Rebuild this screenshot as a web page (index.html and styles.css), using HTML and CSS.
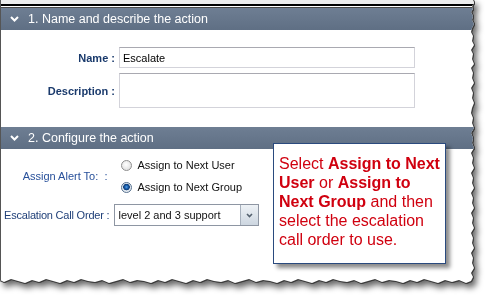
FILE: index.html
```html
<!DOCTYPE html>
<html lang="en">

<head>
    <meta charset="UTF-8">
    <title>Escalate action</title>
    <link rel="stylesheet" href="styles.css">
</head>

<body>
    <div class="frame">
        <div class="sheet">
            <div class="topbar"></div>

            <div class="section-head">
                <svg class="chevron" width="9" height="6" viewBox="0 0 9 6">
                    <polyline points="1,1 4.5,4.5 8,1" fill="none" stroke="#fff" stroke-width="2" />
                </svg>
                <span>1. Name and describe the action</span>
            </div>
            <div class="form form-name">
                <div class="field-label">Name :</div>
                <div class="input">Escalate</div>
                <div class="field-label">Description :</div>
                <div class="input textarea"></div>
            </div>

            <div class="section-head">
                <svg class="chevron" width="9" height="6" viewBox="0 0 9 6">
                    <polyline points="1,1 4.5,4.5 8,1" fill="none" stroke="#fff" stroke-width="2" />
                </svg>
                <span>2. Configure the action</span>
            </div>
            <div class="form form-config">
                <div class="config-label assign">Assign Alert To: &nbsp;:</div>
                <div class="radios">
                    <div class="radio"><span class="radio-dot"></span>Assign to Next User</div>
                    <div class="radio"><span class="radio-dot checked"></span>Assign to Next Group</div>
                </div>
                <div class="config-label">Escalation Call Order :</div>
                <div class="select">
                    <span class="select-value">level 2 and 3 support</span>
                    <span class="select-btn">
                        <svg width="7" height="5" viewBox="0 0 7 5">
                            <polyline points="1,1 3.5,3.5 6,1" fill="none" stroke="#55616f" stroke-width="1.6" />
                        </svg>
                    </span>
                </div>
            </div>

            <div class="callout">
                <p>Select <b>Assign to Next</b> <b>User</b> or <b>Assign to</b> <b>Next Group</b> and then select the escalation call order to use.</p>
            </div>
        </div>
    </div>
</body>

</html>
```

FILE: styles.css
```css
body {
    margin: 0;
    background: #fff;
    font-family: "Liberation Sans", Arial, sans-serif;
    font-size: 11px;
    color: #111;
}

/* torn paper edge with a soft shadow */
.frame {
    width: 493px;
    height: 299px;
    filter: drop-shadow(1px 0 0 #3c3c3c) drop-shadow(0 1px 0 #3c3c3c) drop-shadow(3px 4px 3px rgba(0, 0, 0, 0.6));
}

.sheet {
    position: relative;
    width: 476px;
    height: 285px;
    background: #fff;
    border-left: 1px solid #555;
    clip-path: polygon(0 0, 473px 0, 474px 3px, 472px 6px, 473px 9px, 471px 12px, 473px 16px, 472px 20px, 474px 24px, 472px 28px, 471px 32px, 473px 36px, 472px 41px, 474px 45px, 471px 50px, 473px 54px, 472px 59px, 474px 64px, 471px 68px, 473px 73px, 472px 78px, 474px 83px, 471px 88px, 473px 93px, 472px 98px, 474px 103px, 472px 108px, 471px 113px, 473px 118px, 472px 123px, 474px 128px, 471px 133px, 473px 138px, 472px 143px, 474px 148px, 471px 153px, 473px 158px, 472px 163px, 474px 168px, 471px 173px, 473px 178px, 472px 183px, 474px 188px, 471px 193px, 473px 198px, 472px 203px, 474px 208px, 471px 213px, 473px 218px, 472px 223px, 474px 228px, 471px 233px, 473px 238px, 472px 243px, 474px 248px, 471px 253px, 473px 258px, 472px 263px, 474px 268px, 471px 273px, 473px 277px, 471px 281px,
        466px 283px, 459px 280px, 452px 282px, 445px 280px, 438px 283px, 431px 281px, 424px 279px, 417px 282px, 410px 280px, 403px 283px, 396px 281px, 389px 280px, 382px 282px, 375px 279px, 368px 281px, 361px 283px, 354px 280px, 347px 282px, 340px 281px, 333px 279px, 326px 282px, 319px 280px, 312px 283px, 305px 281px, 298px 279px, 291px 282px, 284px 280px, 277px 283px, 270px 281px, 263px 280px, 256px 282px, 249px 279px, 242px 281px, 235px 283px, 228px 280px, 221px 282px, 214px 281px, 207px 279px, 200px 282px, 193px 280px, 186px 283px, 179px 281px, 172px 279px, 165px 282px, 158px 280px, 151px 283px, 144px 281px, 137px 280px, 130px 282px, 123px 279px, 116px 281px, 109px 283px, 102px 280px, 95px 282px, 88px 281px, 81px 279px, 74px 282px, 67px 280px, 60px 283px, 53px 281px, 46px 279px, 39px 282px, 32px 280px, 25px 283px, 18px 281px, 11px 279px, 4px 282px, 0 280px);
}

.topbar {
    height: 4px;
    background: #ececec;
    border-bottom: 2px solid #000;
    box-shadow: 0 1px 0 #fff, 0 2px 0 #4a4a4a;
    margin-bottom: 2px;
}

.section-head {
    display: flex;
    align-items: center;
    height: 22px;
    padding-left: 9px;
    background: linear-gradient(#6e7e93, #5f6f84);
    color: #fff;
    font-size: 12.5px;
}

.chevron {
    margin-right: 9px;
}

.form {
    display: grid;
}

.form-name {
    grid-template-columns: 114px 296px;
    column-gap: 4px;
    row-gap: 5px;
    padding: 17px 0 19px;
    align-items: center;
}

.field-label {
    text-align: right;
    font-weight: bold;
    color: #1a3a6c;
}

.input {
    box-sizing: border-box;
    height: 21px;
    padding: 4px 3px 0;
    border: 1px solid #d3d3da;
    border-top-color: #a9a9b1;
    color: #000;
}

.textarea {
    height: 35px;
}

.form-config {
    grid-template-columns: max-content 145px;
    column-gap: 5px;
    row-gap: 6px;
    padding: 5px 0 0 3px;
    align-items: center;
}

.config-label {
    text-align: right;
    white-space: nowrap;
    letter-spacing: -0.2px;
    color: #1f3f78;
}

.config-label.assign {
    padding-right: 2px;
    letter-spacing: 0;
    color: #28509a;
}

.radio {
    display: flex;
    align-items: center;
    height: 22px;
    white-space: nowrap;
    color: #111;
}

.radio-dot {
    box-sizing: border-box;
    width: 11px;
    height: 11px;
    margin: 0 5px 0 7px;
    border-radius: 50%;
    border: 1px solid #8e8e8e;
    background: radial-gradient(circle at 45% 40%, #fff, #d6d6d6);
}

.radio-dot.checked {
    border-color: #56708e;
    background: radial-gradient(circle at 50% 45%, #5aa2e6 0, #1c63b4 1.5px, #0c3a74 3px, #dfe6ee 3.6px, #f4f6f8);
}

.select {
    display: flex;
    align-items: center;
    box-sizing: border-box;
    height: 22px;
    border: 1px solid #8e96a3;
    padding-left: 3px;
    white-space: nowrap;
}

.select-value {
    flex: 1;
    color: #111;
}

.select-btn {
    display: flex;
    align-items: center;
    justify-content: center;
    width: 17px;
    height: 100%;
    border-left: 1px solid #a7b0bc;
    background: linear-gradient(#eef2f6, #cdd6e0);
}

/* callout note laid over the form */
.callout {
    position: absolute;
    left: 272px;
    top: 143px;
    box-sizing: border-box;
    width: 173px;
    height: 121px;
    padding: 10px 3px 0 5px;
    border: 1px solid #2a4a7e;
    background: #fff;
    box-shadow: 4px 4px 4px rgba(0, 0, 0, 0.45);
    color: #d0000f;
    font-size: 16px;
    line-height: 19px;
}

.callout p {
    margin: 0;
}
```
